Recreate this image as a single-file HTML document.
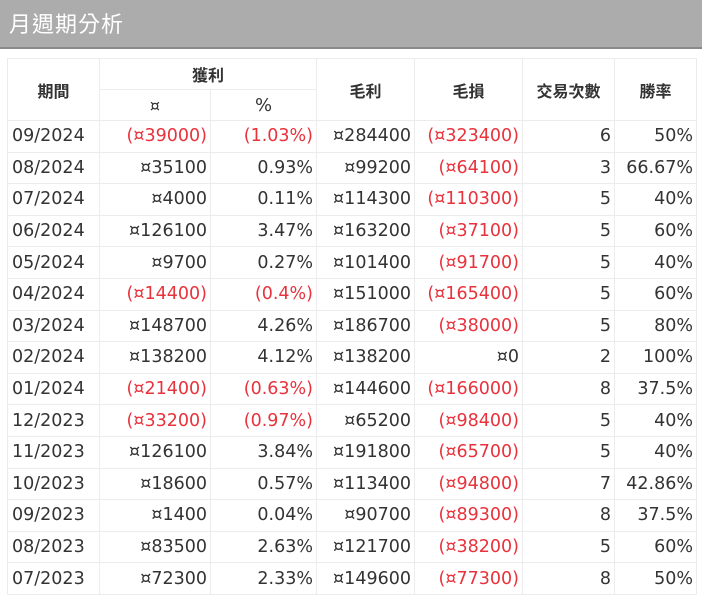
<!DOCTYPE html>
<html><head><meta charset="utf-8"><style>
body{margin:0;width:702px;height:599px;overflow:hidden;background:#fff;font-family:"DejaVu Sans","Noto Sans CJK TC",sans-serif;}
.bar{height:47px;background:#acacac;border-bottom:2px solid #8a8a8a;color:#fff;font-size:22px;line-height:46px;padding-left:9px;letter-spacing:1px;font-family:"Noto Sans CJK TC",sans-serif;}
table{position:absolute;left:7px;top:58px;border-collapse:collapse;table-layout:fixed;font-size:17.5px;color:#333;}
td,th{border:1px solid #ececec;height:30.6px;padding:0 3px;white-space:nowrap;overflow:visible;}
th{font-weight:bold;font-size:16px;text-align:center;height:30px;font-family:"Noto Sans CJK TC",sans-serif;}
td{text-align:right;}
td:first-child{text-align:left;padding-left:4px;}
.r{color:#e8323c;}
</style></head><body>
<div class="bar">月週期分析</div>
<table>
<colgroup><col style="width:92px"><col style="width:111px"><col style="width:106px"><col style="width:98px"><col style="width:108px"><col style="width:92px"><col style="width:82px"></colgroup>
<tr><th rowspan="2">期間</th><th colspan="2">獲利</th><th rowspan="2">毛利</th><th rowspan="2">毛損</th><th rowspan="2">交易次數</th><th rowspan="2">勝率</th></tr>
<tr><th style="font-weight:normal;font-family:'DejaVu Sans',sans-serif">¤</th><th style="font-weight:normal;font-family:'DejaVu Sans',sans-serif;font-size:18px">%</th></tr>
<tr><td>09/2024</td><td class="r">(¤39000)</td><td class="r">(1.03%)</td><td>¤284400</td><td class="r">(¤323400)</td><td>6</td><td>50%</td></tr>
<tr><td>08/2024</td><td>¤35100</td><td>0.93%</td><td>¤99200</td><td class="r">(¤64100)</td><td>3</td><td>66.67%</td></tr>
<tr><td>07/2024</td><td>¤4000</td><td>0.11%</td><td>¤114300</td><td class="r">(¤110300)</td><td>5</td><td>40%</td></tr>
<tr><td>06/2024</td><td>¤126100</td><td>3.47%</td><td>¤163200</td><td class="r">(¤37100)</td><td>5</td><td>60%</td></tr>
<tr><td>05/2024</td><td>¤9700</td><td>0.27%</td><td>¤101400</td><td class="r">(¤91700)</td><td>5</td><td>40%</td></tr>
<tr><td>04/2024</td><td class="r">(¤14400)</td><td class="r">(0.4%)</td><td>¤151000</td><td class="r">(¤165400)</td><td>5</td><td>60%</td></tr>
<tr><td>03/2024</td><td>¤148700</td><td>4.26%</td><td>¤186700</td><td class="r">(¤38000)</td><td>5</td><td>80%</td></tr>
<tr><td>02/2024</td><td>¤138200</td><td>4.12%</td><td>¤138200</td><td>¤0</td><td>2</td><td>100%</td></tr>
<tr><td>01/2024</td><td class="r">(¤21400)</td><td class="r">(0.63%)</td><td>¤144600</td><td class="r">(¤166000)</td><td>8</td><td>37.5%</td></tr>
<tr><td>12/2023</td><td class="r">(¤33200)</td><td class="r">(0.97%)</td><td>¤65200</td><td class="r">(¤98400)</td><td>5</td><td>40%</td></tr>
<tr><td>11/2023</td><td>¤126100</td><td>3.84%</td><td>¤191800</td><td class="r">(¤65700)</td><td>5</td><td>40%</td></tr>
<tr><td>10/2023</td><td>¤18600</td><td>0.57%</td><td>¤113400</td><td class="r">(¤94800)</td><td>7</td><td>42.86%</td></tr>
<tr><td>09/2023</td><td>¤1400</td><td>0.04%</td><td>¤90700</td><td class="r">(¤89300)</td><td>8</td><td>37.5%</td></tr>
<tr><td>08/2023</td><td>¤83500</td><td>2.63%</td><td>¤121700</td><td class="r">(¤38200)</td><td>5</td><td>60%</td></tr>
<tr><td>07/2023</td><td>¤72300</td><td>2.33%</td><td>¤149600</td><td class="r">(¤77300)</td><td>8</td><td>50%</td></tr>
</table>
</body></html>
